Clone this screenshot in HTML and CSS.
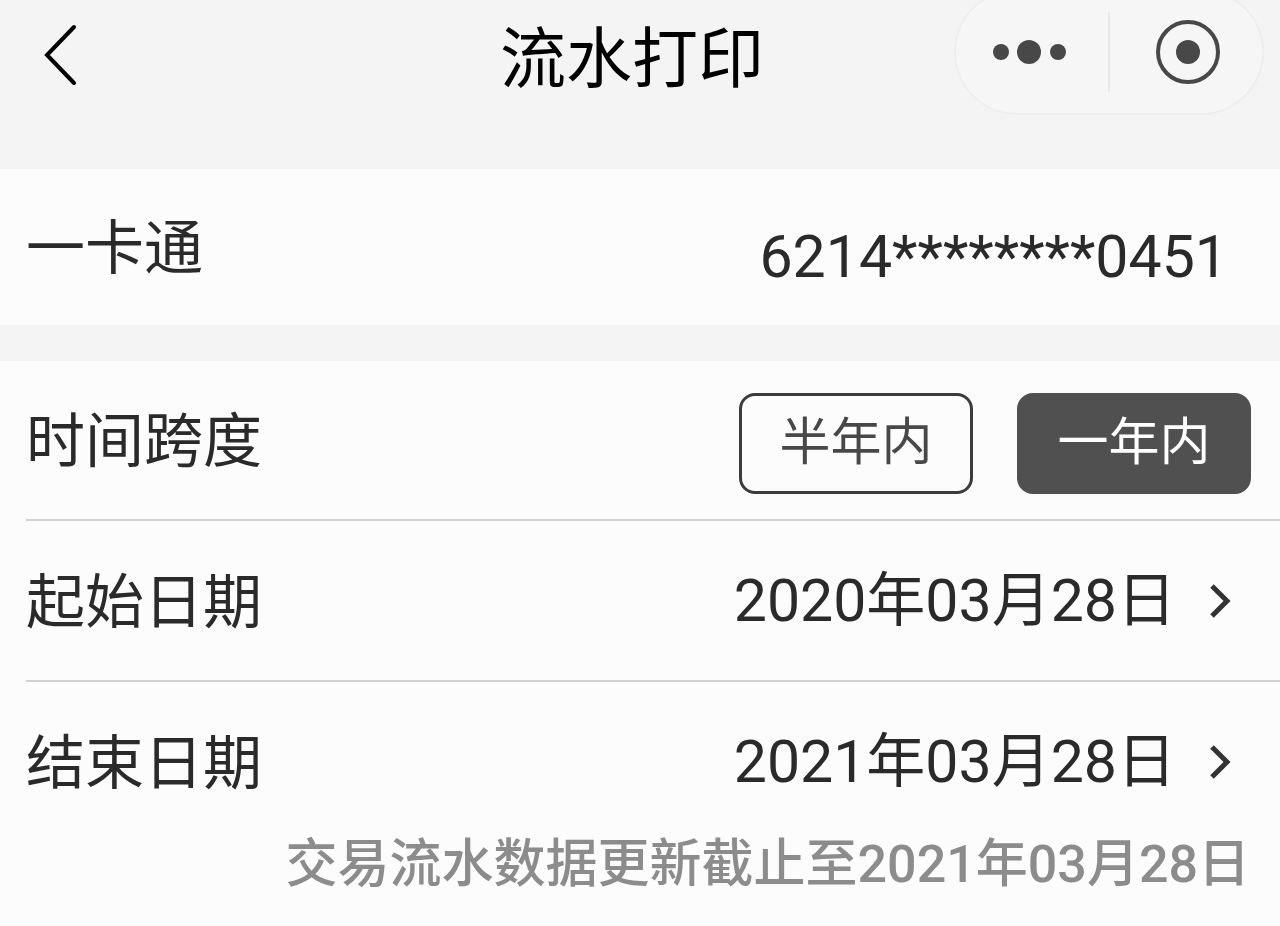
FILE: index.html
```html
<!DOCTYPE html>
<html lang="zh-CN">
<head>
<meta charset="utf-8">
<meta name="viewport" content="width=device-width, initial-scale=1">
<title>流水打印</title>
<link rel="stylesheet" href="styles.css">
</head>
<body>
<header class="topbar">
  <button class="icon-button back" type="button" aria-label="返回">
    <svg width="36" height="64" viewBox="0 0 36 64"><path d="M32 4 5 32l27 28"/></svg>
  </button>
  <h1 class="title">流水打印</h1>
  <div class="capsule">
    <button class="icon-button" type="button" aria-label="更多">
      <svg class="dots" width="80" height="28" viewBox="0 0 80 28"><circle cx="9" cy="14" r="8"/><circle cx="37" cy="14" r="12"/><circle cx="66" cy="14" r="8"/></svg>
    </button>
    <button class="icon-button close" type="button" aria-label="关闭">
      <svg width="68" height="68" viewBox="0 0 68 68"><circle class="ring" cx="36" cy="34" r="30"/><circle class="core" cx="36" cy="34" r="12"/></svg>
    </button>
  </div>
</header>
<main>
  <section class="row card">
    <span class="label">一卡通</span>
    <span class="number">6214********0451</span>
  </section>
  <section class="group">
    <div class="row span">
      <span class="label">时间跨度</span>
      <div class="choices">
        <button class="choice" type="button" aria-pressed="false">半年内</button>
        <button class="choice selected" type="button" aria-pressed="true">一年内</button>
      </div>
    </div>
    <div class="row date">
      <span class="label">起始日期</span>
      <button class="value" type="button">2020年03月28日
        <svg width="24" height="36" viewBox="0 0 24 36"><path d="m4 3 15 15L4 33"/></svg>
      </button>
    </div>
    <div class="row date">
      <span class="label">结束日期</span>
      <button class="value" type="button">2021年03月28日
        <svg width="24" height="36" viewBox="0 0 24 36"><path d="m4 3 15 15L4 33"/></svg>
      </button>
    </div>
    <p class="note">交易流水数据更新截止至2021年03月28日</p>
  </section>
</main>
</body>
</html>
```
FILE: styles.css
```css
* {
  box-sizing: border-box;
}

body {
  margin: 0;
  min-height: 100vh;
  background: #fcfcfc;
  color: #2a2a2a;
  font-family: Roboto, "Noto Sans CJK SC", sans-serif;
  font-size: 59px;
  line-height: 72px;
}

button {
  padding: 0;
  border: 0;
  background: none;
  color: inherit;
  font: inherit;
}

svg {
  display: block;
  fill: none;
  stroke: #333;
  stroke-width: 5;
}

.topbar {
  display: grid;
  grid-template-columns: 1fr auto 1fr;
  align-items: start;
  height: 169px;
  padding-right: 16px;
  background: #f4f4f5;
}

.back {
  justify-self: start;
  padding: 23px 0 0 42px;
}

.back svg {
  stroke: #000;
  stroke-width: 4;
  stroke-linecap: round;
}

.title {
  margin: 0;
  padding-top: 20px;
  color: #000;
  font-size: 66px;
  font-weight: 400;
  line-height: 80px;
}

.capsule {
  display: flex;
  justify-self: end;
  align-items: center;
  width: 310px;
  height: 126px;
  margin-top: -11px;
  border: 2px solid #eeeeef;
  border-radius: 63px;
  background: #f6f6f7;
}

.capsule .icon-button {
  display: grid;
  flex: 1;
  height: 80px;
  place-items: center;
}

.capsule .close {
  border-left: 2px solid #eaeaec;
}

.dots,
.core {
  fill: #484848;
  stroke: none;
}

.ring {
  stroke: #484848;
  stroke-width: 4;
}

.row {
  display: flex;
  align-items: center;
  justify-content: space-between;
}

.label {
  padding-top: 4px;
}

.card {
  min-height: 156px;
  padding: 0 52px 0 26px;
}

.number {
  padding-top: 20px;
}

.group {
  padding-left: 26px;
  border-top: 36px solid #f4f4f4;
}

.span {
  min-height: 158px;
  padding-right: 29px;
}

.choices {
  display: flex;
  gap: 44px;
  padding-top: 6px;
}

.choice {
  width: 234px;
  height: 101px;
  border: 3px solid #3c3c3c;
  border-radius: 16px;
  color: #484848;
  font-size: 51px;
}

.selected {
  background: #505050;
  border-color: #505050;
  color: #fff;
}

.date {
  min-height: 161px;
  padding-right: 48px;
  border-top: 2px solid #d2d2d4;
}

.value {
  display: flex;
  align-items: center;
  gap: 32px;
}

.note {
  margin: -8px 0 0;
  padding-right: 30px;
  color: #8c8c8c;
  font-size: 52px;
  font-weight: 500;
  line-height: 64px;
  text-align: right;
}
```
